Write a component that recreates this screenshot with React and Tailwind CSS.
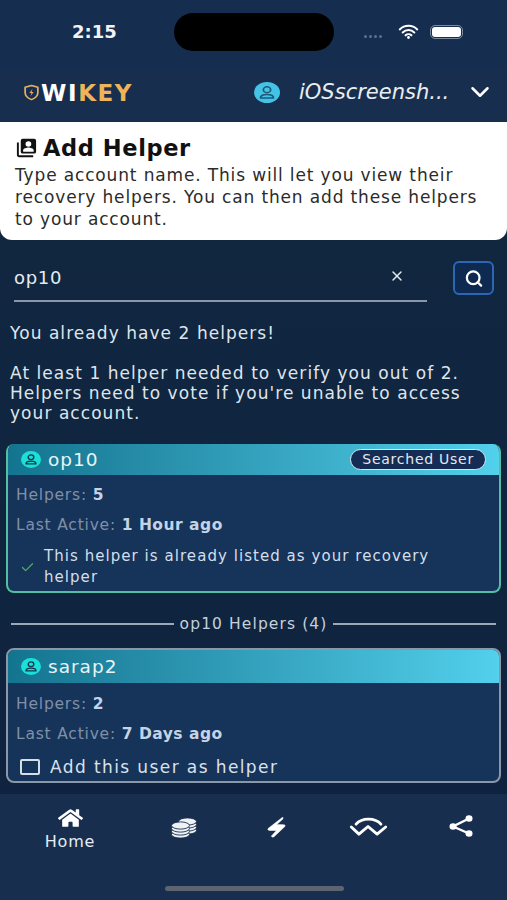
import React from "react";
import { FaHome } from "react-icons/fa";
import { ChevronDown, Search, X, Check } from "lucide-react";

const font = { fontFamily: '"DejaVu Sans", "Liberation Sans", sans-serif' };

function UserIcon({ className, stroke = "#12384f" }) {
  return (
    <svg viewBox="0 0 20 20" preserveAspectRatio="none" className={className}>
      <circle cx="10" cy="10" r="10" fill="currentColor" />
      <circle cx="10" cy="7.4" r="2.8" fill="none" stroke={stroke} strokeWidth="1.4" />
      <path d="M5 15.2c0-2.4 2-3.4 5-3.4s5 1 5 3.4z" fill="none" stroke={stroke} strokeWidth="1.4" strokeLinejoin="round" />
    </svg>
  );
}

function Row({ label, value }) {
  return (
    <div className="text-[15.5px] leading-[20px] tracking-[0.8px] text-[#7f90a7]">
      {label} <span className="font-bold tracking-[0.5px] text-[#c4d4e6]">{value}</span>
    </div>
  );
}

function CardHead({ name, h, children }) {
  return (
    <div className={`${h} flex items-center justify-between bg-gradient-to-r from-[#13748f] to-[#52d0ec] pl-[13px] pr-[13px]`}>
      <div className="flex items-center gap-[7px]">
        <UserIcon className="h-[17px] w-[20px] text-[#1ae0d8]" />
        <span className="text-[18.5px] tracking-[1px] text-[#e8f4f8]">{name}</span>
      </div>
      {children}
    </div>
  );
}

function Coins() {
  const layer = (cx, cy, k) => (
    <ellipse key={k} cx={cx} cy={cy} rx="9" ry="3.6" fill="#eef2f5" stroke="#182e4f" strokeWidth="0.9" />
  );
  return (
    <svg viewBox="0 0 26 22" className="ml-[75px] mt-[9px] h-[22px] w-[26px]">
      {[13.5, 10.5, 7.5, 4.5].map((y, i) => layer(16.500, y, "b" + i))}
      {[17.5, 14.5, 11.5, 8.500].map((y, i) => layer(9.500, y, "f" + i))}
    </svg>
  );
}

export default function App() {
  return (
    <div style={font} className="flex h-[900px] w-[507px] flex-col overflow-hidden bg-[#11253f] text-white">
      <div className="relative h-[70px] shrink-0 bg-[#152d4e]">
        <span className="absolute left-[72px] top-[21px] text-[18px] font-semibold leading-[22px] text-[#f0f2f5]">2:15</span>
        <div className="absolute left-[174px] top-[13px] h-[38px] w-[160px] rounded-full bg-black" />
        <div className="absolute left-[364px] top-[35px] flex gap-[2px]">
          {[0, 1, 2, 3].map((i) => (
            <span key={i} className="h-[3px] w-[3px] rounded-full bg-[#5f7189]" />
          ))}
        </div>
        <svg viewBox="0 0 24 18" className="absolute left-[398px] top-[24px] h-[15px] w-[21px]">
          <path d="M1.5 6.5a15 15 0 0 1 21 0M5 10.2a10 10 0 0 1 14 0M8.5 13.6a5 5 0 0 1 7 0" fill="none" stroke="#fff" strokeWidth="2.4" strokeLinecap="round" />
          <circle cx="12" cy="16.2" r="1.7" fill="#fff" />
        </svg>
        <div className="absolute left-[430px] top-[25px] flex h-[14px] w-[33px] items-center rounded-[5px] border border-[#7c8ba0] p-[1px]">
          <div className="h-full w-full rounded-[3px] bg-white" />
        </div>
      </div>

      <div className="flex h-[52px] shrink-0 items-center justify-between bg-[#182e4f] pl-[23px] pr-[12px]">
        <div className="flex items-center gap-[1px] pb-[7px]">
          <svg viewBox="0 0 16 18" className="h-[17px] w-[17px]" preserveAspectRatio="none">
            <path d="M8 1.5l6 2v5.5c0 3.5-2.5 6-6 7.5-3.5-1.5-6-4-6-7.5V3.500z" fill="none" stroke="#e5b260" strokeWidth="1.6" strokeLinejoin="round" />
            <path d="M9 5L6 9.500h2l-1 3.500 3-4.500H8z" fill="#e5b260" />
          </svg>
          <span className="text-[23px] font-bold leading-[24px] tracking-[1.6px]">
            <span className="text-white">WI</span>
            <span className="text-[#efb458]">KEY</span>
          </span>
        </div>
        <div className="flex items-center pb-[8px]">
          <UserIcon className="h-[21px] w-[26px] text-[#45c3e6]" stroke="#1c5b78" />
          <span className="ml-[19px] w-[152px] whitespace-nowrap text-[21px] italic leading-[28px] text-[#e9eef3]">iOSscreensh...</span>
          <ChevronDown className="ml-[14px] h-[30px] w-[30px] text-white" strokeWidth={2} />
        </div>
      </div>

      <div className="h-[118px] shrink-0 rounded-b-[12px] bg-white pl-[15px] pr-[8px] pt-[13px] text-[#111]">
        <div className="flex items-center gap-[5px]">
          <svg viewBox="0 0 24 24" preserveAspectRatio="none" className="h-[22px] w-[23px] text-[#111]" fill="currentColor">
            <path d="M2 6h2v14h15v2H4a2 2 0 0 1-2-2z" />
            <path d="M8 2h12a2 2 0 0 1 2 2v12a2 2 0 0 1-2 2H8a2 2 0 0 1-2-2V4a2 2 0 0 1 2-2zm6 2.500a3 3 0 1 0 0 6 3 3 0 0 0 0-6zM8.500 16h11v-1.500c0-2-3.700-3-5.500-3s-5.500 1-5.500 3z" fillRule="evenodd" />
          </svg>
          <span className="text-[22.5px] font-bold leading-[26px] tracking-[0.6px]">Add Helper</span>
        </div>
        <p className="mt-[3px] text-[17px] leading-[22px] tracking-[0.85px] text-[#2b2b2b]">
          Type account name. This will let you view their recovery helpers. You can then add these helpers to your account.
        </p>
      </div>

      <div className="flex-1 bg-gradient-to-b from-[#11263f] to-[#0f2340] pl-[10px] pr-[10px]">
        <div className="flex items-start pt-[21px]">
          <div className="ml-[4px] flex h-[41px] w-[413px] items-start justify-between border-b-[2px] border-[#8b97a8] pr-[22px]">
            <span className="text-[18px] leading-[33px] tracking-[0.7px] text-[#e6ebf0]">op10</span>
            <X className="mt-[7px] h-[16px] w-[16px] text-[#e6ebf0]" strokeWidth={2.2} />
          </div>
          <div className="ml-[26px] flex h-[34px] w-[41px] items-center justify-center rounded-[6px] border-[2px] border-[#2b67b5] bg-[#0e2a50]">
            <Search className="h-[19px] w-[20px] text-white" strokeWidth={2.8} />
          </div>
        </div>

        <div className="mt-[21px] text-[17px] leading-[20px] tracking-[1.05px] text-[#dfe5ec]">
          <p>You already have 2 helpers!</p>
          <p className="mt-[20px]">At least 1 helper needed to verify you out of 2. Helpers need to vote if you're unable to access your account.</p>
        </div>

        <div className="-mx-[4px] mt-[21px] overflow-hidden rounded-[8px] border-[2px] border-t-0 border-[#53bea2] bg-[#16335a]">
          <CardHead name="op10" h="h-[31px]">
            <span className="flex h-[21px] items-center rounded-full border-[1.5px] border-[#d5e8f0] bg-[#152c55] px-[11px] text-[14px] tracking-[0.75px] text-[#e1e9f0]">
              Searched User
            </span>
          </CardHead>
          <div className="flex flex-col gap-[10px] pl-[8px] pr-[8px] pt-[10px]">
            <Row label="Helpers:" value="5" />
            <Row label="Last Active:" value="1 Hour ago" />
          </div>
          <div className="mt-[11px] flex items-center pb-[3px] pl-[12px] pr-[20px]">
            <Check className="h-[15px] w-[15px] shrink-0 text-[#4cae63]" strokeWidth={2} />
            <span className="ml-[9px] text-[15px] leading-[21px] tracking-[1.05px] text-[#d4dfea]">
              This helper is already listed as your recovery helper
            </span>
          </div>
        </div>

        <div className="mt-[21px] flex items-center gap-[6px] px-[1px]">
          <div className="h-[1.5px] flex-1 bg-[#9aa8b8]" />
          <span className="text-[15.5px] leading-[20px] tracking-[1.1px] text-[#c4d0dc]">op10 Helpers (4)</span>
          <div className="h-[1.5px] flex-1 bg-[#9aa8b8]" />
        </div>

        <div className="-mx-[4px] mt-[14px] h-[135px] overflow-hidden rounded-[8px] border-[2px] border-[#8a97a6] bg-[#16335a]">
          <CardHead name="sarap2" h="h-[33px]" />
          <div className="flex flex-col gap-[10px] pl-[8px] pr-[8px] pt-[11px]">
            <Row label="Helpers:" value="2" />
            <Row label="Last Active:" value="7 Days ago" />
          </div>
          <div className="mt-[13px] flex items-center pl-[12px]">
            <span className="h-[16px] w-[20px] rounded-[2px] border-[2px] border-[#d5dde6]" />
            <span className="ml-[10px] text-[17px] leading-[20px] tracking-[1.4px] text-[#d9e2ec]">Add this user as helper</span>
          </div>
        </div>
      </div>

      <div className="relative flex h-[106px] shrink-0 items-start bg-[#182e4f] pl-[44px] pt-[14px]">
        <div className="flex w-[52px] flex-col items-center">
          <FaHome className="h-[20px] w-[25px] text-white" preserveAspectRatio="none" />
          <span className="mt-[3px] text-[16px] leading-[22px] tracking-[0.8px] text-[#e6ecf2]">Home</span>
        </div>
        <Coins />
        <svg viewBox="350 45 64 72" className="ml-[69px] mt-[8px] h-[23px] w-[21px]">
          <path d="M400 50 L356 84 Q352 90 362 90 L382 90 L366 108 Q368 113 374 110 L408 78 Q412 72 402 72 L382 72 L402 54 Q404 48 400 50Z" fill="#fff" stroke="#fff" strokeWidth="2" />
        </svg>
        <svg viewBox="0 0 40 22" className="ml-[62px] mt-[8px] h-[21px] w-[39px]">
          <path d="M7 8.500C13 1.500 27 1.500 33 8.500" fill="none" stroke="#fff" strokeWidth="3" strokeLinecap="round" />
          <path d="M2 11.500L10 19l9.500-8 9.500 8 9-7.500" fill="none" stroke="#fff" strokeWidth="3" strokeLinecap="round" strokeLinejoin="round" />
        </svg>
        <svg viewBox="0 0 24 22" className="ml-[61px] mt-[7px] h-[22px] w-[24px]">
          <path d="M20 3.500L4 11.500 20 18.500" fill="none" stroke="#fff" strokeWidth="2.400" />
          <ellipse cx="20" cy="3.500" rx="3.500" ry="3.200" fill="#fff" />
          <ellipse cx="4" cy="11.500" rx="3.500" ry="3.200" fill="#fff" />
          <ellipse cx="20" cy="18.500" rx="3.500" ry="3.200" fill="#fff" />
        </svg>
        <div className="absolute bottom-[9px] left-[165px] h-[5px] w-[179px] rounded-full bg-[#5b6470]" />
      </div>
    </div>
  );
}
